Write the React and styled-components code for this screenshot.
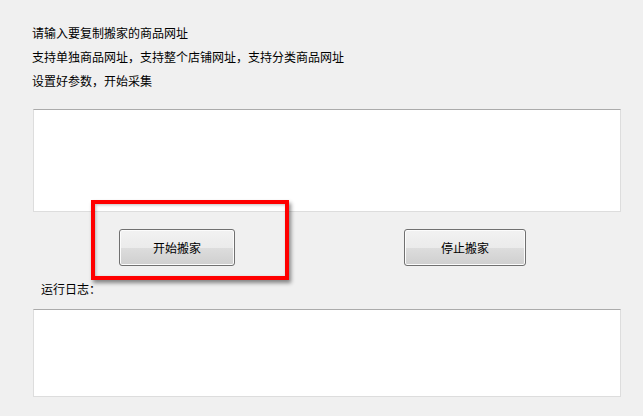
import React from "react";
import styled, { createGlobalStyle } from "styled-components";

const GlobalStyle = createGlobalStyle`
  html, body {
    margin: 0;
    padding: 0;
    background: #f0f0f0;
  }
  body {
    font-family: "Noto Sans CJK SC", "DejaVu Sans", sans-serif;
    font-size: 12px;
    color: #000;
  }
`;

const App = () => {
  return (
    <>
      <GlobalStyle />
      <Page>
        <Intro>
          <Line>请输入要复制搬家的商品网址</Line>
          <Line>支持单独商品网址，支持整个店铺网址，支持分类商品网址</Line>
          <Line>设置好参数，开始采集</Line>
        </Intro>
        <TextBox $height={103} $top={16} />
        <ButtonRow>
          <Highlighted>
            <Button $width={116}>开始搬家</Button>
            <RedMark />
          </Highlighted>
          <Button $width={122}>停止搬家</Button>
        </ButtonRow>
        <LogLabel>运行日志：</LogLabel>
        <TextBox $height={88} $top={0} />
      </Page>
    </>
  );
};

export default App;

const Page = styled.div`
  width: 643px;
  height: 416px;
  display: flex;
  flex-direction: column;
  padding-top: 21px;
  box-sizing: border-box;
  overflow: hidden;
`;

const Intro = styled.div`
  display: flex;
  flex-direction: column;
  padding-left: 32px;
`;

const Line = styled.div`
  height: 24px;
  line-height: 24px;
  white-space: nowrap;
`;

const TextBox = styled.div`
  margin-left: 33px;
  margin-top: ${p => p.$top}px;
  width: 588px;
  height: ${p => p.$height}px;
  box-sizing: border-box;
  background: #fff;
  border: 1px solid #dddddd;
  border-top-color: #ababab;
`;

const ButtonRow = styled.div`
  display: flex;
  align-items: flex-start;
  gap: 169px;
  padding-left: 119px;
  margin-top: 17px;
`;

const Highlighted = styled.div`
  position: relative;
`;

const RedMark = styled.div`
  position: absolute;
  left: -28px;
  top: -29px;
  width: 198px;
  height: 80px;
  box-sizing: border-box;
  border: 4px solid #ff0000;
  box-shadow: 2px 3px 4px rgba(0, 0, 0, 0.45), inset 1px 1px 3px rgba(0, 0, 0, 0.25);
  pointer-events: none;
`;

const Button = styled.button`
  width: ${p => p.$width}px;
  height: 37px;
  box-sizing: border-box;
  border: 1px solid #707070;
  border-radius: 3px;
  background: linear-gradient(to bottom, #f2f2f2 0%, #ebebeb 50%, #dddddd 51%, #cfcfcf 100%);
  box-shadow: inset 0 0 0 1px #fcfcfc;
  font-family: "Noto Sans CJK SC", "DejaVu Sans", sans-serif;
  font-size: 12px;
  color: #000;
  padding: 0;
  cursor: default;
`;

const LogLabel = styled.div`
  margin: 16px 0 0 41px;
  height: 14px;
  line-height: 14px;
  margin-bottom: 13px;
`;
